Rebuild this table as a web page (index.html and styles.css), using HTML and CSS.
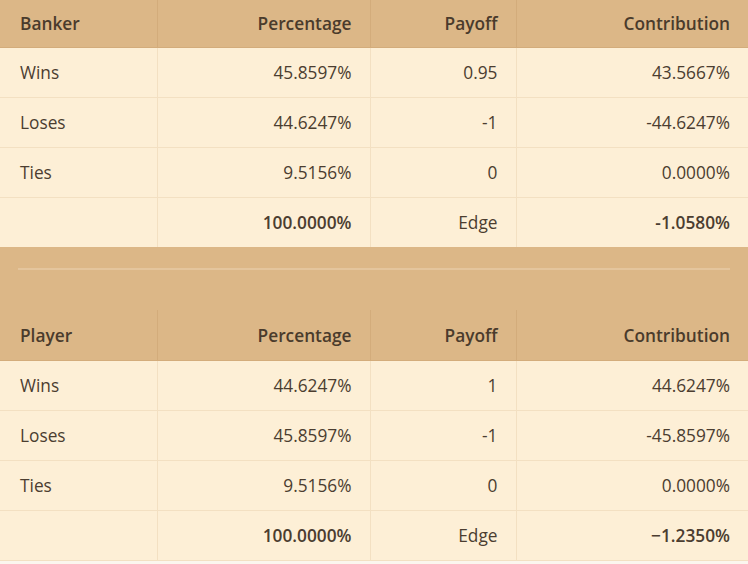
FILE: index.html
```html
<!DOCTYPE html>
<html>
<head>
<meta charset="utf-8">
<link rel="stylesheet" href="styles.css">
</head>
<body>
<div class="page">
  <table class="odds first">
    <colgroup><col class="c1"><col class="c2"><col class="c3"><col class="c4"></colgroup>
    <thead>
      <tr><th class="l">Banker</th><th>Percentage</th><th>Payoff</th><th>Contribution</th></tr>
    </thead>
    <tbody>
      <tr><td class="l">Wins</td><td>45.8597%</td><td>0.95</td><td>43.5667%</td></tr>
      <tr><td class="l">Loses</td><td>44.6247%</td><td>-1</td><td>-44.6247%</td></tr>
      <tr><td class="l">Ties</td><td>9.5156%</td><td>0</td><td>0.0000%</td></tr>
      <tr><td class="l"></td><td class="b">100.0000%</td><td>Edge</td><td class="b">-1.0580%</td></tr>
    </tbody>
  </table>
  <div class="divider"><hr class="rule"></div>
  <table class="odds">
    <colgroup><col class="c1"><col class="c2"><col class="c3"><col class="c4"></colgroup>
    <thead>
      <tr><th class="l">Player</th><th>Percentage</th><th>Payoff</th><th>Contribution</th></tr>
    </thead>
    <tbody>
      <tr><td class="l">Wins</td><td>44.6247%</td><td>1</td><td>44.6247%</td></tr>
      <tr><td class="l">Loses</td><td>45.8597%</td><td>-1</td><td>-45.8597%</td></tr>
      <tr><td class="l">Ties</td><td>9.5156%</td><td>0</td><td>0.0000%</td></tr>
      <tr><td class="l"></td><td class="b">100.0000%</td><td>Edge</td><td class="b">&minus;1.2350%</td></tr>
    </tbody>
  </table>
</div>
</body>
</html>
```
FILE: styles.css
```css
html, body {
  margin: 0;
  padding: 0;
  background: #fbf6ee;
}
.page {
  width: 748px;
  font-family: "Open Sans", "Liberation Sans", sans-serif;
  font-size: 17.3px;
  color: #4b3d30;
}
.odds {
  width: 748px;
  table-layout: fixed;
  border-collapse: collapse;
}
.c1 { width: 157px; }
.c2 { width: 213px; }
.c3 { width: 146px; }
.c4 { width: 232px; }
.odds th, .odds td {
  text-align: right;
  padding: 0 18px 0 20px;
  white-space: nowrap;
}
.odds th {
  background: #dcb787;
  font-weight: 600;
  height: 50px;
  border: 1px solid #d3ac7b;
  border-top: none;
  color: #4a3b2c;
}
.first th { height: 47px; }
.odds td {
  background: #fdefd6;
  height: 49px;
  border: 1px solid #f3e0c2;
  font-weight: 400;
}
.odds .l { text-align: left; }
.odds .b { font-weight: 600; }
.odds th:first-child, .odds td:first-child { border-left: none; }
.odds th:last-child, .odds td:last-child { border-right: none; }
.first tbody tr:last-child td { border-bottom: none; }
.divider {
  background: #dcb787;
  height: 63px;
  padding: 21px 18px 0 18px;
  box-sizing: border-box;
}
.rule {
  margin: 0;
  border: none;
  height: 2px;
  background: #e4c59d;
}
```
